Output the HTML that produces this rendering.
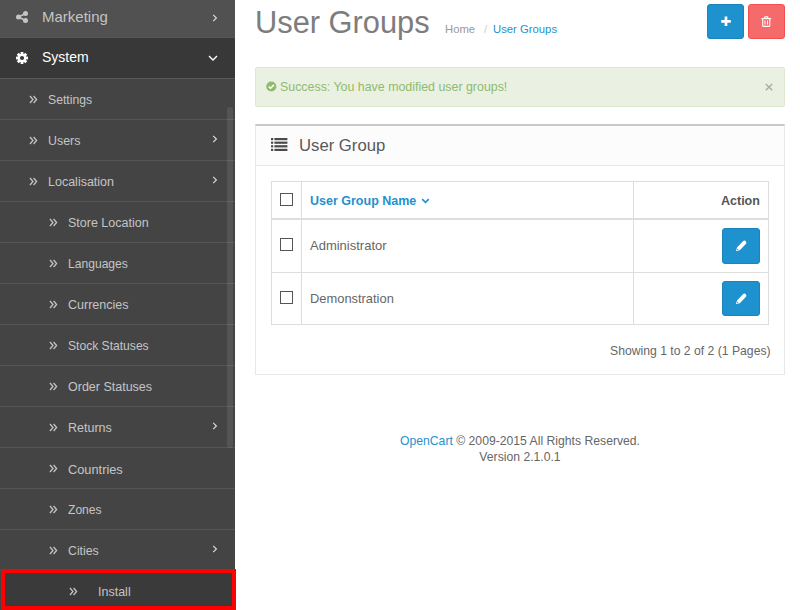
<!DOCTYPE html>
<html><head><meta charset="utf-8">
<style>
*{box-sizing:border-box;margin:0;padding:0}
html,body{width:800px;height:610px;overflow:hidden;background:#fff;font-family:"Liberation Sans",sans-serif;color:#666;font-size:12px}
#side{position:absolute;left:0;top:0;width:235px;height:610px;background:#444}
.top{position:absolute;left:0;width:235px;background:#515151;border-bottom:1px solid #585858;color:#c4c4c4;font-size:14.5px}
.top .t{position:absolute;white-space:nowrap}
.top svg{position:absolute}
.sys{background:#383838}
.sub{position:absolute;left:0;width:235px;height:41px;border-bottom:1px solid #555;background:#444;color:#c4c4c4;font-size:12.5px}
.sub .t{position:absolute;top:14px;white-space:nowrap}
.sub .ic{position:absolute;top:16px;width:9px;height:9px}
.sub .ic svg,.sub .ar svg{display:block}
.sub .ar{position:absolute;left:211.5px;top:15px}
#scroll{position:absolute;left:227px;top:107px;width:6px;height:341px;background:rgba(255,255,255,0.09);border-radius:3px}
#hl{position:absolute;left:1px;top:569px;width:235px;height:41px;border:4px solid #f00;background:#3a3a3a}
#hl .t{position:absolute;left:93px;top:12px;color:#c4c4c4;font-size:12.5px}
#hl .ic{position:absolute;left:64px;top:12px}
#main{position:absolute;left:235px;top:0;right:0;bottom:0}
h1{position:absolute;left:20px;top:5px;font-size:30.8px;font-weight:normal;color:#7d7d7d;white-space:nowrap}
.bc{position:absolute;top:23px;font-size:11.3px;white-space:nowrap}
.btn{position:absolute;top:4px;width:37px;height:35px;border-radius:3px}
.btn svg{position:absolute;left:-1px;top:-1px}
.alert{position:absolute;left:20px;top:67px;width:530px;height:40px;background:#eaf1e3;border:1px solid #dde9d0;border-radius:2px;color:#8fbb6c;font-size:12.4px}
.alert .t{position:absolute;left:24px;top:12px;white-space:nowrap}
.alert .ok{position:absolute;left:10px;top:13px}
.alert .x{position:absolute;left:509px;top:15px}
.panel{position:absolute;left:20px;top:124px;width:530px;height:251px;border:1px solid #e8e8e8;border-top:2px solid #c9c9c9;border-radius:0}
.ph{position:absolute;left:0;top:0;right:0;height:40px;background:#fcfcfc;border-bottom:1px solid #e8e8e8}
.ph .t{position:absolute;left:43px;top:10px;font-size:16.7px;color:#595959;white-space:nowrap}
.ph svg{position:absolute;left:15px;top:12px}
.tbl{position:absolute;left:15px;top:55px;width:498px;height:144px;border:1px solid #ddd}
.tbl .hr{position:absolute;left:0;top:0;width:100%;height:38px;border-bottom:2px solid #ddd}
.tbl .r{position:absolute;left:0;width:100%;border-bottom:1px solid #ddd}
.tbl .vl{position:absolute;top:0;bottom:0;width:1px;background:#ddd}
.cb{position:absolute;left:8px;width:13px;height:13px;border:1px solid #555;background:#fff}
.tt{position:absolute;white-space:nowrap}
.eb{position:absolute;left:450px;width:38px;height:36px;border-radius:3px;background:#1e91cf;border:1px solid #1b84bd}
.eb svg{position:absolute;left:-1px;top:-1px}
.foot{position:absolute;left:20px;width:530px;text-align:center;white-space:nowrap;font-size:12.2px}
</style></head><body>
<div id="side">
  <div class="top" style="top:-3px;height:41px">
    <svg style="left:16px;top:14px" width="12" height="12" viewBox="0 0 12 12"><circle cx="9.5" cy="2.5" r="2.5" fill="#c4c4c4"/><circle cx="2.5" cy="6" r="2.5" fill="#c4c4c4"/><circle cx="9.5" cy="9.5" r="2.5" fill="#c4c4c4"/><path d="M9.5 2.5L2.5 6L9.5 9.5" stroke="#c4c4c4" stroke-width="1.6" fill="none"/></svg>
    <span class="t" style="left:42px;top:11px;font-size:15px">Marketing</span>
    <svg style="left:211.5px;top:16.5px" width="6" height="8" viewBox="0 0 6 8"><path d="M1.2 0.8L4.4 4L1.2 7.2" stroke="#d8d8d8" stroke-width="1.2" fill="none"/></svg>
  </div>
  <div class="top sys" style="top:38px;height:41px">
    <svg style="left:16px;top:14px" width="12" height="12" viewBox="0 0 12 12"><g fill="#fff"><circle cx="6" cy="6" r="4.3"/><rect x="4.6" y="0" width="2.8" height="12"/><rect x="0" y="4.6" width="12" height="2.8"/><rect x="4.6" y="0" width="2.8" height="12" transform="rotate(45 6 6)"/><rect x="4.6" y="0" width="2.8" height="12" transform="rotate(-45 6 6)"/></g><circle cx="6" cy="6" r="2.1" fill="#383838"/></svg>
    <span class="t" style="left:42px;top:11px;color:#fff;font-size:14px">System</span>
    <svg style="left:208px;top:17px" width="10" height="6" viewBox="0 0 10 6"><path d="M1 1L5 5L9 1" stroke="#fff" stroke-width="1.4" fill="none"/></svg>
  </div>
<div class="sub" style="top:79px"><span class="ic" style="left:29px"><svg class="dbl" width="9" height="9" viewBox="0 0 9 9"><path d="M1 1L4 4.5L1 8M4.6 1L7.6 4.5L4.6 8" stroke="#c4c4c4" stroke-width="1.3" fill="none"/></svg></span><span class="t" style="left:48px;font-size:12.2px">Settings</span></div>
<div class="sub" style="top:120px"><span class="ic" style="left:29px"><svg class="dbl" width="9" height="9" viewBox="0 0 9 9"><path d="M1 1L4 4.5L1 8M4.6 1L7.6 4.5L4.6 8" stroke="#c4c4c4" stroke-width="1.3" fill="none"/></svg></span><span class="t" style="left:48px;font-size:12.4px">Users</span><span class="ar"><svg width="6" height="8" viewBox="0 0 6 8"><path d="M1.2 0.8L4.4 4L1.2 7.2" stroke="#d8d8d8" stroke-width="1.2" fill="none"/></svg></span></div>
<div class="sub" style="top:161px"><span class="ic" style="left:29px"><svg class="dbl" width="9" height="9" viewBox="0 0 9 9"><path d="M1 1L4 4.5L1 8M4.6 1L7.6 4.5L4.6 8" stroke="#c4c4c4" stroke-width="1.3" fill="none"/></svg></span><span class="t" style="left:48px;font-size:12.5px">Localisation</span><span class="ar"><svg width="6" height="8" viewBox="0 0 6 8"><path d="M1.2 0.8L4.4 4L1.2 7.2" stroke="#d8d8d8" stroke-width="1.2" fill="none"/></svg></span></div>
<div class="sub" style="top:202px"><span class="ic" style="left:49px"><svg class="dbl" width="9" height="9" viewBox="0 0 9 9"><path d="M1 1L4 4.5L1 8M4.6 1L7.6 4.5L4.6 8" stroke="#c4c4c4" stroke-width="1.3" fill="none"/></svg></span><span class="t" style="left:68px;font-size:12.5px">Store Location</span></div>
<div class="sub" style="top:243px"><span class="ic" style="left:49px"><svg class="dbl" width="9" height="9" viewBox="0 0 9 9"><path d="M1 1L4 4.5L1 8M4.6 1L7.6 4.5L4.6 8" stroke="#c4c4c4" stroke-width="1.3" fill="none"/></svg></span><span class="t" style="left:68px;font-size:12.1px">Languages</span></div>
<div class="sub" style="top:284px"><span class="ic" style="left:49px"><svg class="dbl" width="9" height="9" viewBox="0 0 9 9"><path d="M1 1L4 4.5L1 8M4.6 1L7.6 4.5L4.6 8" stroke="#c4c4c4" stroke-width="1.3" fill="none"/></svg></span><span class="t" style="left:68px;font-size:12.5px">Currencies</span></div>
<div class="sub" style="top:325px"><span class="ic" style="left:49px"><svg class="dbl" width="9" height="9" viewBox="0 0 9 9"><path d="M1 1L4 4.5L1 8M4.6 1L7.6 4.5L4.6 8" stroke="#c4c4c4" stroke-width="1.3" fill="none"/></svg></span><span class="t" style="left:68px;font-size:12.1px">Stock Statuses</span></div>
<div class="sub" style="top:366px"><span class="ic" style="left:49px"><svg class="dbl" width="9" height="9" viewBox="0 0 9 9"><path d="M1 1L4 4.5L1 8M4.6 1L7.6 4.5L4.6 8" stroke="#c4c4c4" stroke-width="1.3" fill="none"/></svg></span><span class="t" style="left:68px;font-size:12.5px">Order Statuses</span></div>
<div class="sub" style="top:407px"><span class="ic" style="left:49px"><svg class="dbl" width="9" height="9" viewBox="0 0 9 9"><path d="M1 1L4 4.5L1 8M4.6 1L7.6 4.5L4.6 8" stroke="#c4c4c4" stroke-width="1.3" fill="none"/></svg></span><span class="t" style="left:68px;font-size:12.5px">Returns</span><span class="ar"><svg width="6" height="8" viewBox="0 0 6 8"><path d="M1.2 0.8L4.4 4L1.2 7.2" stroke="#d8d8d8" stroke-width="1.2" fill="none"/></svg></span></div>
<div class="sub" style="top:448px"><span class="ic" style="left:49px"><svg class="dbl" width="9" height="9" viewBox="0 0 9 9"><path d="M1 1L4 4.5L1 8M4.6 1L7.6 4.5L4.6 8" stroke="#c4c4c4" stroke-width="1.3" fill="none"/></svg></span><span class="t" style="left:68px;font-size:12.8px">Countries</span></div>
<div class="sub" style="top:489px"><span class="ic" style="left:49px"><svg class="dbl" width="9" height="9" viewBox="0 0 9 9"><path d="M1 1L4 4.5L1 8M4.6 1L7.6 4.5L4.6 8" stroke="#c4c4c4" stroke-width="1.3" fill="none"/></svg></span><span class="t" style="left:68px;font-size:12.1px">Zones</span></div>
<div class="sub" style="top:530px"><span class="ic" style="left:49px"><svg class="dbl" width="9" height="9" viewBox="0 0 9 9"><path d="M1 1L4 4.5L1 8M4.6 1L7.6 4.5L4.6 8" stroke="#c4c4c4" stroke-width="1.3" fill="none"/></svg></span><span class="t" style="left:68px;font-size:12.3px">Cities</span><span class="ar"><svg width="6" height="8" viewBox="0 0 6 8"><path d="M1.2 0.8L4.4 4L1.2 7.2" stroke="#d8d8d8" stroke-width="1.2" fill="none"/></svg></span></div>
  <div id="scroll"></div>
  <div id="hl"><span class="ic"><svg class="dbl" width="9" height="9" viewBox="0 0 9 9"><path d="M1 1L4 4.5L1 8M4.6 1L7.6 4.5L4.6 8" stroke="#c4c4c4" stroke-width="1.3" fill="none"/></svg></span><span class="t">Install</span></div>
</div>
<div id="main">
  <h1>User Groups</h1>
  <span class="bc" style="left:210px;color:#999">Home</span>
  <span class="bc" style="left:249px;color:#ccc">/</span>
  <span class="bc" style="left:258px;color:#1e91cf">User Groups</span>
  <div class="btn" style="left:472px;background:#1e91cf;border:1px solid #1b84bd"><svg width="37" height="35" viewBox="0 0 37 35"><path d="M14.2 17.3H23.8M19 12.5V22.1" stroke="#fff" stroke-width="2.7"/></svg></div>
  <div class="btn" style="left:513px;background:#f56b6b;border:1px solid #f25050"><svg width="37" height="35" viewBox="0 0 37 35"><g stroke="#fff" stroke-width="1.1" fill="none"><path d="M13.4 14.6H23.1"/><path d="M16.3 14.4L16.9 12.9H19.6L20.2 14.4"/><path d="M14.7 14.6V21.4Q14.7 22.4 15.7 22.4H20.8Q21.8 22.4 21.8 21.4V14.6"/><path d="M17 16.4V20.6M19.5 16.4V20.6" stroke-width="1"/></g></svg></div>
  <div class="alert">
    <svg class="ok" width="11" height="11" viewBox="0 0 11 11"><circle cx="5.3" cy="5.5" r="5.1" fill="#8fbb6c"/><path d="M2.7 5.6L4.5 7.3L7.9 3.9" stroke="#fff" stroke-width="1.5" fill="none"/></svg>
    <span class="t">Success: You have modified user groups!</span>
    <svg class="x" width="8" height="8" viewBox="0 0 8 8"><path d="M0.8 1L7.2 7.2M7.2 1L0.8 7.2" stroke="#a9aca6" stroke-width="1.4"/></svg>
  </div>
  <div class="panel">
    <div class="ph">
      <svg width="17" height="13" viewBox="0 0 17 13"><g fill="#4a4a4a"><rect x="0" y="0" width="2.2" height="2.2"/><rect x="3.4" y="0" width="13" height="2.2"/><rect x="0" y="3.6" width="2.2" height="2.2"/><rect x="3.4" y="3.6" width="13" height="2.2"/><rect x="0" y="7.2" width="2.2" height="2.2"/><rect x="3.4" y="7.2" width="13" height="2.2"/><rect x="0" y="10.8" width="2.2" height="2.2"/><rect x="3.4" y="10.8" width="13" height="2.2"/></g></svg>
      <span class="t">User Group</span>
    </div>
    <div class="tbl">
      <div class="hr"></div>
      <div class="r" style="top:38px;height:53px"></div>
      <div class="vl" style="left:29px"></div>
      <div class="vl" style="left:361px"></div>
      <div class="cb" style="top:11px"></div>
      <span class="tt" style="left:38px;top:12px;color:#1e91cf;font-weight:bold;font-size:12.5px">User Group Name</span>
      <svg style="position:absolute;left:149px;top:16px" width="9" height="6" viewBox="0 0 9 6"><path d="M1.2 1.2L4.5 4.3L7.8 1.2" stroke="#1e91cf" stroke-width="1.6" fill="none"/></svg>
      <span class="tt" style="left:449px;top:12px;color:#555;font-weight:bold;font-size:12.5px">Action</span>
      <div class="cb" style="top:56px"></div>
      <span class="tt" style="left:38px;top:56px;font-size:13px">Administrator</span>
      <div class="eb" style="top:46px"><svg width="38" height="36" viewBox="0 0 38 36"><path d="M13.9 23.3L15 19.5L21 13.3A1.98 1.98 0 0 1 23.8 16.1L17.8 22.3Z" fill="#fff"/><circle cx="15.5" cy="21.7" r="0.65" fill="#1e91cf"/></svg></div>
      <div class="cb" style="top:109px"></div>
      <span class="tt" style="left:38px;top:109px;font-size:12.9px">Demonstration</span>
      <div class="eb" style="top:99px;height:35px"><svg width="38" height="36" viewBox="0 0 38 36"><path d="M13.9 23.3L15 19.5L21 13.3A1.98 1.98 0 0 1 23.8 16.1L17.8 22.3Z" fill="#fff"/><circle cx="15.5" cy="21.7" r="0.65" fill="#1e91cf"/></svg></div>
    </div>
    <span class="tt" style="left:354px;top:218px;font-size:12.2px">Showing 1 to 2 of 2 (1 Pages)</span>
  </div>
  <div class="foot" style="top:434px"><span style="color:#1e91cf">OpenCart</span> © 2009-2015 All Rights Reserved.</div>
  <div class="foot" style="top:450px">Version 2.1.0.1</div>
</div>
</body></html>
